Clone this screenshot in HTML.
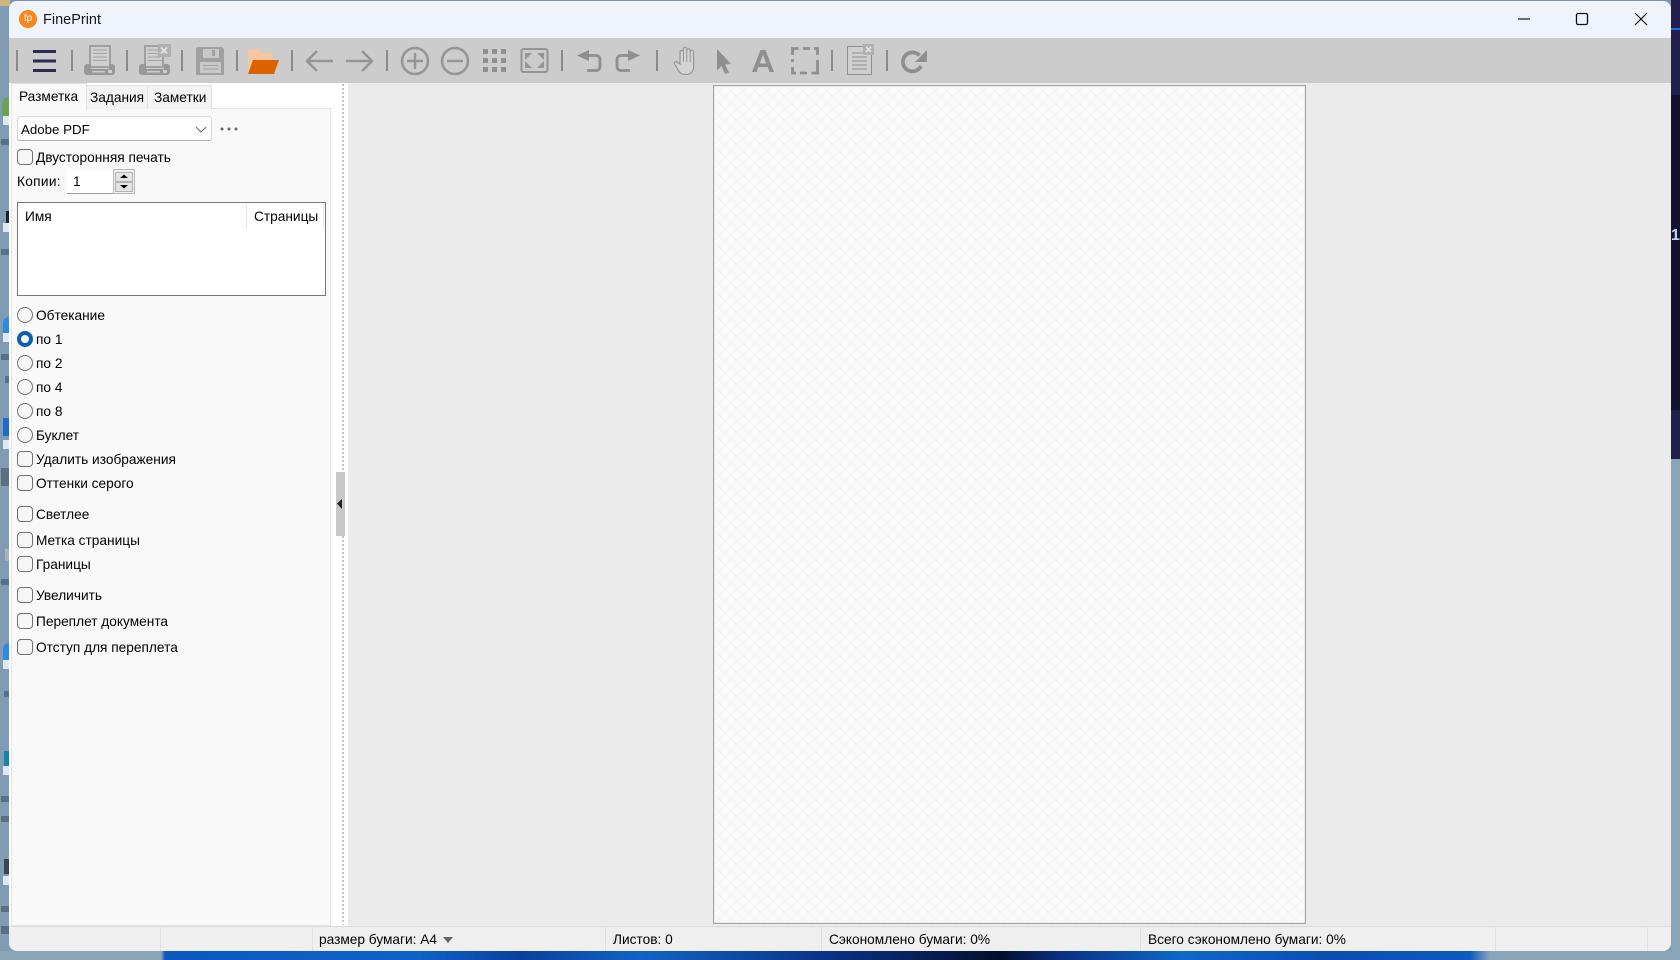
<!DOCTYPE html>
<html lang="ru"><head><meta charset="utf-8"><title>FinePrint</title>
<style>
html,body{margin:0;padding:0;width:1680px;height:960px;overflow:hidden;background:#7f9cb4}
body{position:relative;font-family:"Liberation Sans",sans-serif;font-size:13.7px;color:#000}
.a,.t{position:absolute}
.t{white-space:nowrap;line-height:16px}
.cb{position:absolute;left:17px;width:14px;height:14px;border:1px solid #707070;border-radius:4px;background:#f6f6f6}
.rb{position:absolute;left:17px;width:14px;height:14px;border:1px solid #707070;border-radius:50%;background:#f6f6f6}
.sep{position:absolute;top:926px;height:25px;width:1px;background:#e0e0e0}
.s{opacity:.45}
</style></head><body>
<!-- desktop behind -->
<div class="a" style="left:0;top:0;width:1680px;height:1px;background:#7d93ad"></div>
<div class="a" style="left:0;top:0;width:10px;height:6px;background:#cdb77a"></div>
<div class="a" style="left:1671px;top:0;width:9px;height:95px;background:#221f4a"></div>
<div class="a" style="left:1671px;top:28px;width:9px;height:2px;background:#1d6fe0"></div>
<div class="a" style="left:1671px;top:95px;width:9px;height:315px;background:#14122e"></div>
<div class="a" style="left:1671px;top:410px;width:9px;height:49px;background:#221f4a"></div>
<div class="a" style="left:1671px;top:459px;width:9px;height:501px;background:#8aa4b8"></div>
<div class="a t" style="left:1671px;top:228px;font-size:16px;color:#bcd6f5;font-weight:bold">1</div>
<div class="a" style="left:0;top:951px;width:1680px;height:9px;background:linear-gradient(90deg,#8aa4b8 0,#8aa4b8 161px,#0c58c0 165px,#0f62c8 420px,#0a3f9c 520px,#1164c4 640px,#0a2f80 840px,#03102c 1000px,#0a2f80 1060px,#0f68c6 1180px,#0b4db0 1330px,#0d5bbc 1470px,#8aa4b8 1490px,#8aa4b8 1680px)"></div>
<!-- left icon fragments -->
<div class="a" style="left:2px;top:97px;width:7px;height:20px;background:#6aa255;border-radius:7px 0 0 0"></div>
<div class="a" style="left:3px;top:116px;width:6px;height:9px;background:#dfe8f1"></div>
<div class="a s" style="left:1px;top:139px;width:8px;height:6px;background:#2f3d4a"></div>
<div class="a" style="left:6px;top:211px;width:3px;height:14px;background:#1c2430"></div>
<div class="a" style="left:3px;top:223px;width:6px;height:9px;background:#dfe8f1"></div>
<div class="a s" style="left:1px;top:249px;width:8px;height:6px;background:#2f3d4a"></div>
<div class="a" style="left:3px;top:317px;width:6px;height:17px;background:#2c8be0;border-radius:6px 0 0 0"></div>
<div class="a" style="left:3px;top:333px;width:6px;height:9px;background:#dfe8f1"></div>
<div class="a s" style="left:1px;top:354px;width:8px;height:6px;background:#2f3d4a"></div>
<div class="a s" style="left:5px;top:376px;width:4px;height:7px;background:#2f3d4a"></div>
<div class="a" style="left:3px;top:418px;width:6px;height:18px;background:#1c6cc8"></div>
<div class="a" style="left:3px;top:440px;width:6px;height:9px;background:#dfe8f1"></div>
<div class="a s" style="left:1px;top:468px;width:8px;height:18px;background:#2f3d4a"></div>
<div class="a" style="left:5px;top:549px;width:4px;height:12px;background:#a9b3bb"></div>
<div class="a s" style="left:1px;top:579px;width:8px;height:6px;background:#2f3d4a"></div>
<div class="a" style="left:3px;top:643px;width:6px;height:17px;background:#2c8be0;border-radius:6px 0 0 0"></div>
<div class="a" style="left:3px;top:660px;width:6px;height:9px;background:#dfe8f1"></div>
<div class="a s" style="left:4px;top:691px;width:5px;height:6px;background:#2f3d4a"></div>
<div class="a" style="left:4px;top:751px;width:5px;height:15px;background:#1785a8"></div>
<div class="a" style="left:3px;top:766px;width:6px;height:9px;background:#dfe8f1"></div>
<div class="a s" style="left:1px;top:796px;width:8px;height:6px;background:#2f3d4a"></div>
<div class="a s" style="left:1px;top:816px;width:8px;height:6px;background:#2f3d4a"></div>
<div class="a" style="left:4px;top:859px;width:5px;height:15px;background:#3a4756"></div>
<div class="a" style="left:3px;top:876px;width:6px;height:9px;background:#dfe8f1"></div>
<div class="a s" style="left:1px;top:906px;width:8px;height:6px;background:#2f3d4a"></div>
<div class="a s" style="left:1px;top:926px;width:8px;height:8px;background:#2f3d4a"></div>

<!-- window -->
<div class="a" style="left:9px;top:1px;width:1662px;height:950px;background:#ebebeb;border-radius:8px;overflow:hidden">
  <div class="a" style="left:0;top:0;width:1662px;height:37px;background:#eef3fc"></div>
  <div class="a" style="left:0;top:37px;width:1662px;height:45px;background:#cccccc"></div>
  <div class="a" style="left:0;top:82px;width:339px;height:843px;background:#fff"></div>
  <div class="a" style="left:0;top:925px;width:1662px;height:25px;background:#efefef;border-top:1px solid #dcdcdc;box-sizing:border-box"></div>
</div>

<!-- title -->
<div class="a" style="left:19px;top:10px;width:18px;height:18px;border-radius:50%;background:#f7861e;color:#fff;font-size:10px;line-height:17px;text-align:center">fp</div>
<div class="t" style="left:43px;top:11px;font-size:14.5px;line-height:18px;color:#1a1a1a">FinePrint</div>
<svg class="a" style="left:1500px;top:5px" width="170" height="30" fill="none" stroke="#111">
  <path d="M18 14h12" stroke-width="1.2"/>
  <rect x="76.500" y="8.500" width="11" height="11" rx="1.600" stroke-width="1.300"/>
  <path d="M135 8l12 12M147 8l-12 12" stroke-width="1.200"/>
</svg>

<!-- toolbar -->
<svg class="a" style="left:0;top:38px" width="1000" height="45" viewBox="0 38 1000 45">
  <g fill="#8a8a8a">
    <rect x="16" y="50" width="2" height="21"/><rect x="71" y="50" width="2" height="21"/><rect x="126" y="50" width="2" height="21"/>
    <rect x="181" y="50" width="2" height="21"/><rect x="236" y="50" width="2" height="21"/><rect x="291" y="50" width="2" height="21"/>
    <rect x="386" y="50" width="2" height="21"/><rect x="561" y="50" width="2" height="21"/><rect x="656" y="50" width="2" height="21"/>
    <rect x="831" y="50" width="2" height="21"/><rect x="886" y="50" width="2" height="21"/>
  </g>
  <g fill="#2b2b50">
    <rect x="33" y="50" width="23" height="3"/><rect x="33" y="59.500" width="23" height="3"/><rect x="33" y="69" width="23" height="3"/>
  </g>
  <!-- printer 1 -->
  <g>
    <path d="M90 46h20v21H90z" fill="#cfcfcf" stroke="#a0a0a0" stroke-width="2"/>
    <path d="M93 50h14M93 53.500h14M93 57h14M93 60.500h14" stroke="#a6a6a6" stroke-width="1"/>
    <path d="M87 64h4v5h18v-5h3a3 3 0 0 1 3 3v5a3 3 0 0 1-3 3H87a3 3 0 0 1-3-3v-5a3 3 0 0 1 3-3z" fill="#989898"/>
    <rect x="92" y="71" width="13" height="1.500" fill="#cfcfcf"/><rect x="108" y="70" width="4" height="3" fill="#cfcfcf"/>
  </g>
  <!-- printer 2 -->
  <g transform="translate(55,0)">
    <path d="M90 46h18v21H90z" fill="#cfcfcf" stroke="#a0a0a0" stroke-width="2"/>
    <path d="M93 50h12M93 53.500h12M93 57h12M93 60.500h14" stroke="#a6a6a6" stroke-width="1"/>
    <path d="M87 64h4v5h18v-5h3a3 3 0 0 1 3 3v5a3 3 0 0 1-3 3H87a3 3 0 0 1-3-3v-5a3 3 0 0 1 3-3z" fill="#989898"/>
    <rect x="92" y="71" width="13" height="1.500" fill="#cfcfcf"/><rect x="108" y="70" width="4" height="3" fill="#cfcfcf"/>
  </g>
  <rect x="158" y="44" width="13" height="13" fill="#b0b0b0"/>
  <path d="M161 47.500l6 6M167 47.500l-6 6" stroke="#e4e4e4" stroke-width="1.800"/>
  <!-- save -->
  <path d="M198 47h23a3 3 0 0 1 3 3v25h-28V49a2 2 0 0 1 2-2z" fill="#a0a0a0"/>
  <rect x="203" y="49" width="16" height="9" fill="#c8c8c8"/><rect x="212" y="50" width="3" height="6" fill="#a0a0a0"/>
  <rect x="200" y="62" width="21" height="11" fill="#c8c8c8"/>
  <path d="M203 65.500h15M203 69h15" stroke="#a0a0a0" stroke-width="1"/>
  <!-- folder -->
  <path d="M248 49h10l4 4h10v8h-17l-7 13z" fill="#f4c7a0"/>
  <path d="M253 60h26l-5 14h-26z" fill="#dc6200"/>
  <!-- arrows -->
  <g fill="none" stroke="#959595" stroke-width="2.500">
    <path d="M307 61h26M317 51l-10 10 10 10"/>
    <path d="M346 61h26M362 51l10 10-10 10"/>
    <circle cx="415" cy="61" r="13"/><path d="M415 53v16M407 61h16"/>
    <circle cx="455" cy="61" r="13"/><path d="M447 61h16"/>
  </g>
  <!-- grid -->
  <g fill="#8f8f8f">
    <rect x="483" y="49" width="5" height="5"/><rect x="492" y="49" width="5" height="5"/><rect x="501" y="49" width="5" height="5"/>
    <rect x="483" y="58" width="5" height="5"/><rect x="492" y="58" width="5" height="5"/><rect x="501" y="58" width="5" height="5"/>
    <rect x="483" y="67" width="5" height="5"/><rect x="492" y="67" width="5" height="5"/><rect x="501" y="67" width="5" height="5"/>
  </g>
  <!-- fit -->
  <rect x="521.500" y="49" width="26" height="23" rx="2" fill="none" stroke="#959595" stroke-width="2"/>
  <path d="M525 53h7l-7 7zM544 53h-7l7 7zM525 68h7l-7-7zM544 68h-7l7-7z" fill="#959595"/>
  <!-- undo / redo -->
  <path d="M577 55.500l12-5.500v11z" fill="#8f8f8f"/>
  <path d="M587 55.500h9a4 4 0 0 1 4 4v7a4 4 0 0 1-4 4h-9" fill="none" stroke="#8f8f8f" stroke-width="2.800"/>
  <path d="M640 55.500l-12-5.500v11z" fill="#8f8f8f"/>
  <path d="M630 55.500h-9a4 4 0 0 0-4 4v7a4 4 0 0 0 4 4h9" fill="none" stroke="#8f8f8f" stroke-width="2.800"/>
  <!-- hand -->
  <path d="M680 64V52a1.700 1.700 0 0 1 3.400 0V49a1.700 1.700 0 0 1 3.400 0v1.500a1.700 1.700 0 0 1 3.400 0V52a1.700 1.700 0 0 1 3.400 0v15c0 4-3 7.500-7 7.500h-2c-3 0-5-2-6.500-4.500l-3.500-6c-1-2 1.500-3.500 3-1.500z" fill="#d4d4d4" stroke="#969696" stroke-width="1.200"/>
  <path d="M683.400 52v10M686.800 50v12M690.200 51v11" stroke="#969696" stroke-width="1"/>
  <!-- pointer -->
  <path d="M717 49l14 15-6 .5 4 8-4 1.500-3.500-8-4.500 4.500z" fill="#8f8f8f"/>
  <!-- A -->
  <path d="M760.500 50h5l8.500 22h-4.500l-1.800-5h-9.400l-1.800 5h-4.500zM759.800 63.500h6.400l-3.200-9z" fill="#8f8f8f" fill-rule="evenodd"/>
  <!-- selection -->
  <path d="M792.500 55v-6.500h6M803 48.500h7M814 48.500h3.500V55M817.500 60v7M817.500 67v6h-6M807 73h-7M796 73h-3.500v-6M792.500 62v-3" fill="none" stroke="#8f8f8f" stroke-width="2.800"/>
  <!-- doc x -->
  <rect x="847.500" y="46.500" width="24" height="28" fill="#cfcfcf" stroke="#8f8f8f" stroke-width="1"/>
  <path d="M852 53h15M852 57h15M852 61h15M852 65h15M852 69h15" stroke="#8f8f8f" stroke-width="1"/>
  <rect x="863" y="44" width="11" height="11" fill="#b0b0b0"/>
  <path d="M866 47l5 5M871 47l-5 5" stroke="#e4e4e4" stroke-width="1.600"/>
  <!-- refresh -->
  <path d="M921 66a9.500 9.500 0 1 1-1.500-10.500" fill="none" stroke="#8f8f8f" stroke-width="3.800"/>
  <path d="M927 50v12h-12z" fill="#8f8f8f"/>
</svg>

<!-- tab pane -->
<div class="a" style="left:11px;top:108px;width:318px;height:816px;background:#f9f9f9;border:1px solid #e4e4e4"></div>
<div class="a" style="left:85px;top:85px;width:61px;height:23px;background:#f3f3f3;border:1px solid #e2e2e2;border-bottom:0"></div>
<div class="a" style="left:147px;top:85px;width:63px;height:23px;background:#f3f3f3;border:1px solid #e2e2e2;border-bottom:0"></div>
<div class="a" style="left:11px;top:83px;width:74px;height:26px;background:#f9f9f9;border:1px solid #e2e2e2;border-bottom:0"></div>
<div class="t" style="left:19px;top:89px">Разметка</div>
<div class="t" style="left:90px;top:90px">Задания</div>
<div class="t" style="left:154px;top:90px">Заметки</div>

<!-- printer combo -->
<div class="a" style="left:17px;top:116px;width:193px;height:23px;background:#fff;border:1px solid #d8d8d8;border-bottom-color:#b0b0b0;border-radius:3px"></div>
<div class="t" style="left:21px;top:122px;font-size:13.300px">Adobe PDF</div>
<svg class="a" style="left:195px;top:125px" width="12" height="10" fill="none" stroke="#666" stroke-width="1"><path d="M1 2l5 5 5-5"/></svg>
<svg class="a" style="left:219px;top:126px" width="20" height="6" fill="#666"><circle cx="3" cy="3" r="1.500"/><circle cx="10" cy="3" r="1.500"/><circle cx="17" cy="3" r="1.500"/></svg>

<div class="cb" style="top:149px"></div><div class="t" style="left:36px;top:150px">Двусторонняя печать</div>
<div class="t" style="left:17px;top:174px;letter-spacing:.3px">Копии:</div>
<div class="a" style="left:67px;top:170px;width:46px;height:23px;background:#fff;border-bottom:1px solid #9a9a9a"></div>
<div class="t" style="left:73px;top:174px">1</div>
<div class="a" style="left:113px;top:169px;width:22px;height:25px;background:#f0f0f0;border:1px solid #b8b8b8;box-sizing:border-box"></div>
<div class="a" style="left:115px;top:172px;width:18px;height:10px;background:#e4e4e4;border:1px solid #b4b4b4;box-sizing:border-box"></div>
<div class="a" style="left:115px;top:182px;width:18px;height:10px;background:#e4e4e4;border:1px solid #b4b4b4;box-sizing:border-box"></div>
<svg class="a" style="left:115px;top:172px" width="18" height="20" fill="#000"><path d="M9 2.500l4 3.500H5z"/><path d="M9 16.500l4-3.500H5z"/></svg>

<!-- list -->
<div class="a" style="left:17px;top:202px;width:307px;height:92px;background:#fff;border:1px solid #777"></div>
<div class="a" style="left:246px;top:204px;width:1px;height:24px;background:#e4e4e4"></div>
<div class="a" style="left:323px;top:204px;width:1px;height:24px;background:#e4e4e4"></div>
<div class="t" style="left:25px;top:209px">Имя</div>
<div class="t" style="left:254px;top:209px">Страницы</div>

<!-- radios -->
<div class="rb" style="top:307px"></div><div class="t" style="left:36px;top:308px">Обтекание</div>
<div class="a" style="left:17px;top:331px;width:16px;height:16px;border-radius:50%;background:#fff;border:4.500px solid #0a5fb4;box-sizing:border-box"></div><div class="t" style="left:36px;top:332px">по 1</div>
<div class="rb" style="top:355px"></div><div class="t" style="left:36px;top:356px">по 2</div>
<div class="rb" style="top:379px"></div><div class="t" style="left:36px;top:380px">по 4</div>
<div class="rb" style="top:403px"></div><div class="t" style="left:36px;top:404px">по 8</div>
<div class="rb" style="top:427px"></div><div class="t" style="left:36px;top:428px">Буклет</div>
<div class="cb" style="top:451px"></div><div class="t" style="left:36px;top:452px">Удалить изображения</div>
<div class="cb" style="top:475px"></div><div class="t" style="left:36px;top:476px">Оттенки серого</div>
<div class="cb" style="top:506px"></div><div class="t" style="left:36px;top:507px">Светлее</div>
<div class="cb" style="top:532px"></div><div class="t" style="left:36px;top:533px">Метка страницы</div>
<div class="cb" style="top:556px"></div><div class="t" style="left:36px;top:557px">Границы</div>
<div class="cb" style="top:587px"></div><div class="t" style="left:36px;top:588px">Увеличить</div>
<div class="cb" style="top:613px"></div><div class="t" style="left:36px;top:614px">Переплет документа</div>
<div class="cb" style="top:639px"></div><div class="t" style="left:36px;top:640px">Отступ для переплета</div>

<!-- splitter -->
<div class="a" style="left:342px;top:84px;width:2px;height:841px;background:repeating-linear-gradient(180deg,#c4c4c4 0,#c4c4c4 2px,transparent 2px,transparent 4px)"></div>
<div class="a" style="left:336px;top:472px;width:9px;height:64px;background:#c8c8c8"></div>
<svg class="a" style="left:336px;top:498px" width="9" height="12"><path d="M1 5.500L6 1v10z" fill="#222"/></svg>

<!-- page -->
<svg class="a" style="left:713px;top:85px" width="593" height="839">
  <defs><pattern id="p" width="12" height="12" patternUnits="userSpaceOnUse">
    <rect width="12" height="12" fill="#fafafa"/>
    <path d="M0 0L12 12M12 0L0 12" stroke="#f5f5f5" stroke-width="1.200"/>
  </pattern></defs>
  <rect x=".5" y=".5" width="592" height="838" fill="url(#p)" stroke="#a4a4a4" stroke-width="1.300"/>
</svg>

<!-- status -->
<div class="sep" style="left:160px"></div><div class="sep" style="left:312px"></div><div class="sep" style="left:605px"></div>
<div class="sep" style="left:821px"></div><div class="sep" style="left:1140px"></div><div class="sep" style="left:1495px"></div><div class="sep" style="left:1647px"></div>
<div class="t" style="left:319px;top:932px">размер бумаги: А4</div>
<svg class="a" style="left:442px;top:936px" width="12" height="8"><path d="M1 1h10L6 7z" fill="#666"/></svg>
<div class="t" style="left:613px;top:932px">Листов: 0</div>
<div class="t" style="left:829px;top:932px">Сэкономлено бумаги: 0%</div>
<div class="t" style="left:1148px;top:932px">Всего сэкономлено бумаги: 0%</div>
</body></html>
